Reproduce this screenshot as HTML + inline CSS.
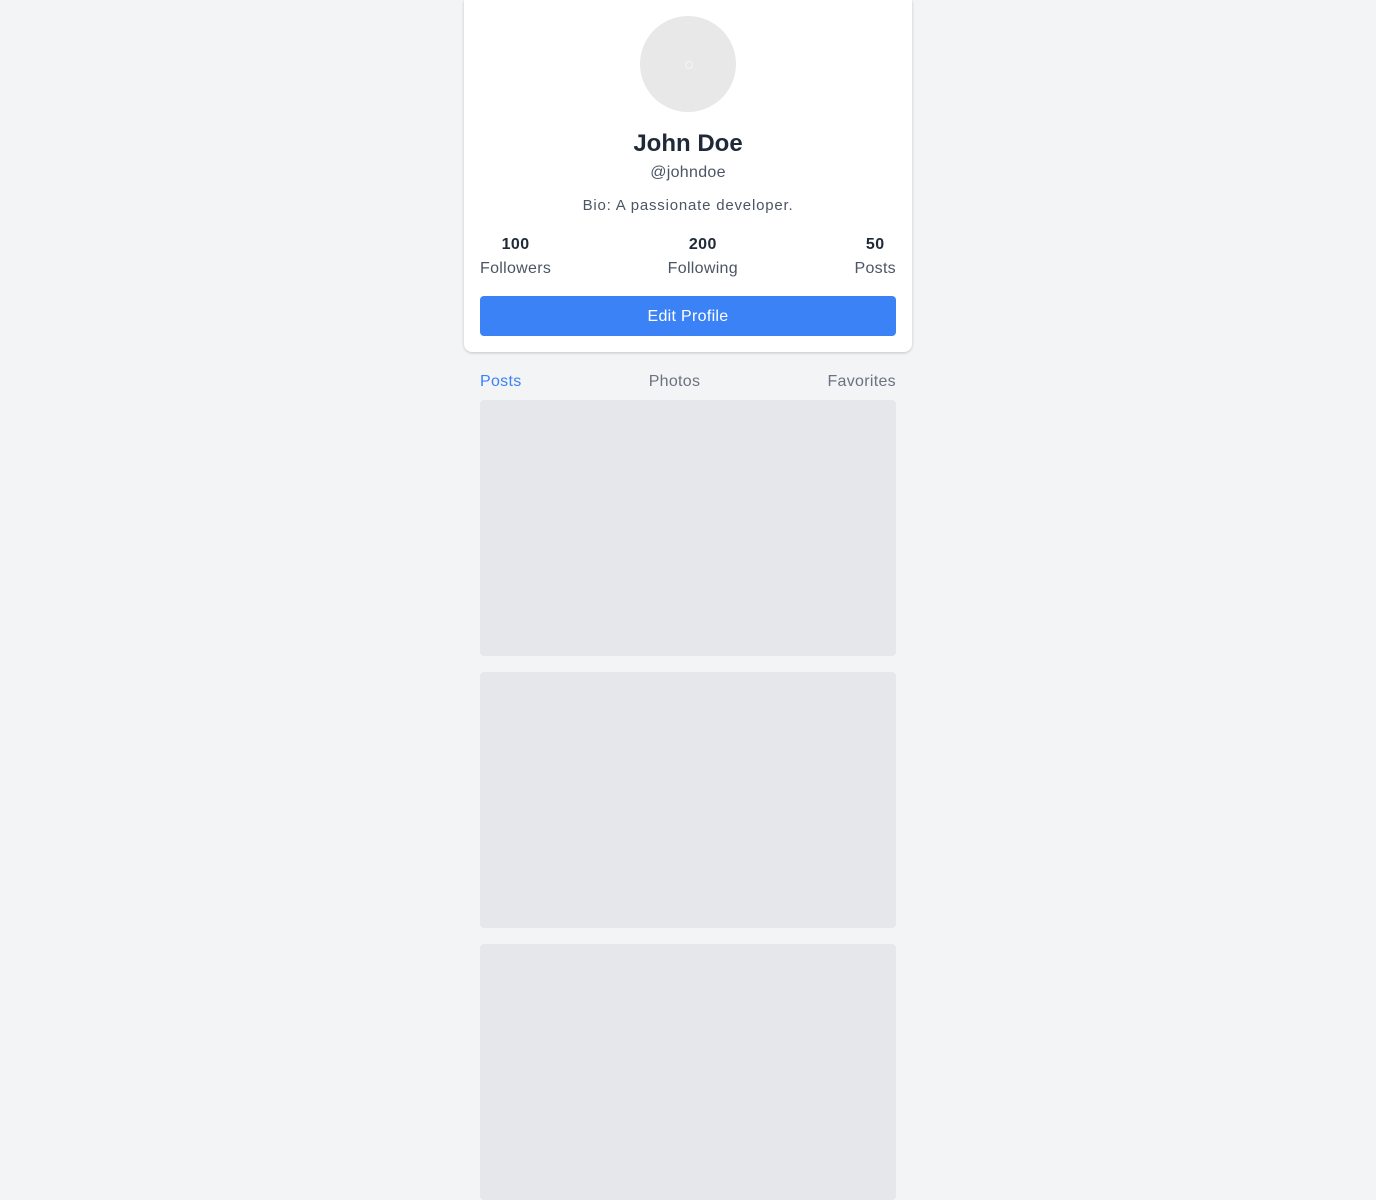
<!DOCTYPE html>
<html><head><meta charset="utf-8"><style>
*{box-sizing:border-box;margin:0;padding:0}
body{background:#f3f4f6;font-family:"Liberation Sans",sans-serif;width:1376px;height:1200px;overflow:hidden}
.wrap{width:448px;margin:0 auto}
.card{background:#fff;border-radius:0 0 8px 8px;box-shadow:0 1px 3px rgba(0,0,0,.12),0 1px 2px rgba(0,0,0,.08);padding:16px;height:352px;text-align:center}
.av{width:96px;height:96px;border-radius:50%;background:#e8e8e8;margin:0 auto;position:relative}
.av:after{content:"";position:absolute;left:45px;top:45px;width:6px;height:6px;border-radius:50%;border:1px solid #f5f5f5}
h1{font-size:24px;font-weight:700;color:#1f2937;margin-top:18px;line-height:28px}
.h{color:#4b5563;font-size:16px;line-height:24px;margin-top:3px;letter-spacing:.3px}
.bio{color:#4b5563;font-size:15px;line-height:20px;margin-top:11px;letter-spacing:.8px}
.stats{display:flex;justify-content:space-between;margin-top:17px}
.stats div{text-align:center}
.stats b{display:block;font-size:16px;color:#1f2937;line-height:24px;letter-spacing:.4px}
.stats span{font-size:16px;color:#4b5563;line-height:24px;letter-spacing:.3px}
.btn{margin-top:15px;height:40px;background:#3b82f6;color:#fff;border-radius:4px;font-size:16px;line-height:42px;letter-spacing:.3px;overflow:hidden}
.tabs{display:flex;justify-content:space-between;padding:0 16px;margin-top:16px;font-size:16px;line-height:24px;color:#6b7280;letter-spacing:.3px;position:relative;top:2px;height:24px}
.tabs .a{color:#3b82f6}
.post{margin:8px 16px 16px;height:256px;background:#e5e7eb;border-radius:4px}
</style></head><body>
<div class="wrap">
<div class="card">
<div class="av"></div>
<h1>John Doe</h1>
<div class="h">@johndoe</div>
<div class="bio">Bio: A passionate developer.</div>
<div class="stats">
<div><b>100</b><span>Followers</span></div>
<div><b>200</b><span>Following</span></div>
<div><b>50</b><span>Posts</span></div>
</div>
<div class="btn">Edit Profile</div>
</div>
<div class="tabs"><span class="a">Posts</span><span>Photos</span><span>Favorites</span></div>
<div class="post" style="margin-top:8px"></div>
<div class="post" style="margin-top:16px"></div>
<div class="post" style="margin-top:16px"></div>
</div>
</body></html>
